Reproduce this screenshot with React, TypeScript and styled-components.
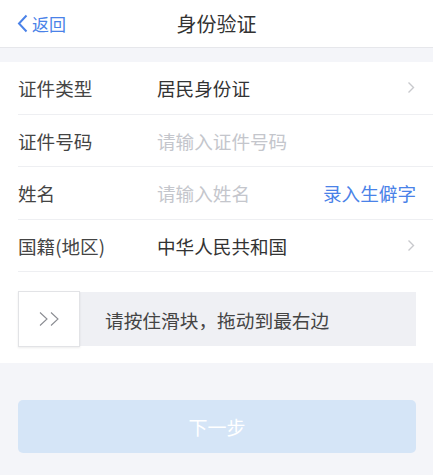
import React, { FC } from 'react';
import styled, { createGlobalStyle } from 'styled-components';

const GlobalStyle = createGlobalStyle`
  html, body {
    margin: 0;
    padding: 0;
    background: #f4f5f9;
    font-family: "Noto Sans CJK SC", "Noto Sans", sans-serif;
  }
`;

const Page = styled.div`
  width: 433px;
  min-height: 475px;
  background: #f4f5f9;
`;

const NavBar = styled.div`
  height: 47px;
  background: #fff;
  border-bottom: 1px solid #e6e7eb;
  display: flex;
  align-items: center;
  position: relative;
`;

const BackLink = styled.div`
  display: flex;
  align-items: center;
  gap: 4px;
  padding-left: 17px;
  color: #4a82e8;
  font-size: 17px;
  line-height: 1;
`;

const Title = styled.div`
  position: absolute;
  left: 0;
  right: 0;
  text-align: center;
  font-size: 20px;
  color: #333;
  pointer-events: none;
`;

const FormSection = styled.div`
  margin-top: 14px;
  background: #fff;
  padding-left: 18px;
  padding-bottom: 17px;
`;

const Row = styled.div`
  box-sizing: border-box;
  height: 52.5px;
  display: flex;
  align-items: center;
  border-bottom: 1px solid #eeeff2;
  padding-right: 18px;
  font-size: 18.6px;
`;

const Label = styled.div`
  width: 139px;
  color: #444;
`;

const Value = styled.div<{ $placeholder?: boolean }>`
  flex: 1;
  color: ${(p) => (p.$placeholder ? '#c4c6cc' : '#333')};
`;

const LinkText = styled.div`
  color: #4a82e8;
  margin-right: -1px;
`;

const Slider = styled.div`
  margin-top: 20px;
  margin-right: 17px;
  height: 54px;
  display: flex;
  background: #eff0f4;
`;

const Knob = styled.div`
  width: 60px;
  margin: -1px 0;
  background: #fff;
  border: 1px solid #e2e3e6;
  box-shadow: 0 1px 2px rgba(0, 0, 0, 0.08);
  display: flex;
  align-items: center;
  justify-content: center;
`;

const SliderText = styled.div`
  display: flex;
  align-items: center;
  padding-left: 25px;
  font-size: 18.7px;
  color: #444;
`;

const ButtonWrap = styled.div`
  padding: 37px 17px 0 18px;
`;

const NextButton = styled.button`
  width: 100%;
  height: 53px;
  border: none;
  border-radius: 5px;
  background: #d5e5f7;
  color: #fff;
  font-size: 19px;
  font-family: inherit;
`;

const Chevron: FC = () => (
  <svg width="8" height="13" viewBox="0 0 8 13">
    <path d="M1.5 1.5 L6.5 6.5 L1.5 11.5" fill="none" stroke="#c8c9cd" strokeWidth="1.4" />
  </svg>
);

const rows = [
  { label: '证件类型', value: '居民身份证', chevron: true },
  { label: '证件号码', value: '请输入证件号码', placeholder: true },
  { label: '姓名', value: '请输入姓名', placeholder: true, link: '录入生僻字' },
  { label: '国籍(地区)', value: '中华人民共和国', chevron: true },
];

const App: FC = () => {
  return (
    <Page>
      <GlobalStyle />
      <NavBar>
        <BackLink>
          <svg width="11" height="19" viewBox="0 0 11 19">
            <path d="M9.5 1.5 L2 9.5 L9.5 17.5" fill="none" stroke="#4a82e8" strokeWidth="2" />
          </svg>
          返回
        </BackLink>
        <Title>身份验证</Title>
      </NavBar>
      <FormSection>
        {rows.map((r) => (
          <Row key={r.label}>
            <Label>{r.label}</Label>
            <Value $placeholder={r.placeholder}>{r.value}</Value>
            {r.link && <LinkText>{r.link}</LinkText>}
            {r.chevron && <Chevron />}
          </Row>
        ))}
        <Slider>
          <Knob>
            <svg width="21" height="14" viewBox="0 0 21 14">
              <path d="M1 0.5 L8 7 L1 13.5 M12 0.5 L19 7 L12 13.5" fill="none" stroke="#8a8c92" strokeWidth="1.1" />
            </svg>
          </Knob>
          <SliderText>请按住滑块，拖动到最右边</SliderText>
        </Slider>
      </FormSection>
      <ButtonWrap>
        <NextButton>下一步</NextButton>
      </ButtonWrap>
    </Page>
  );
};

export default App;
